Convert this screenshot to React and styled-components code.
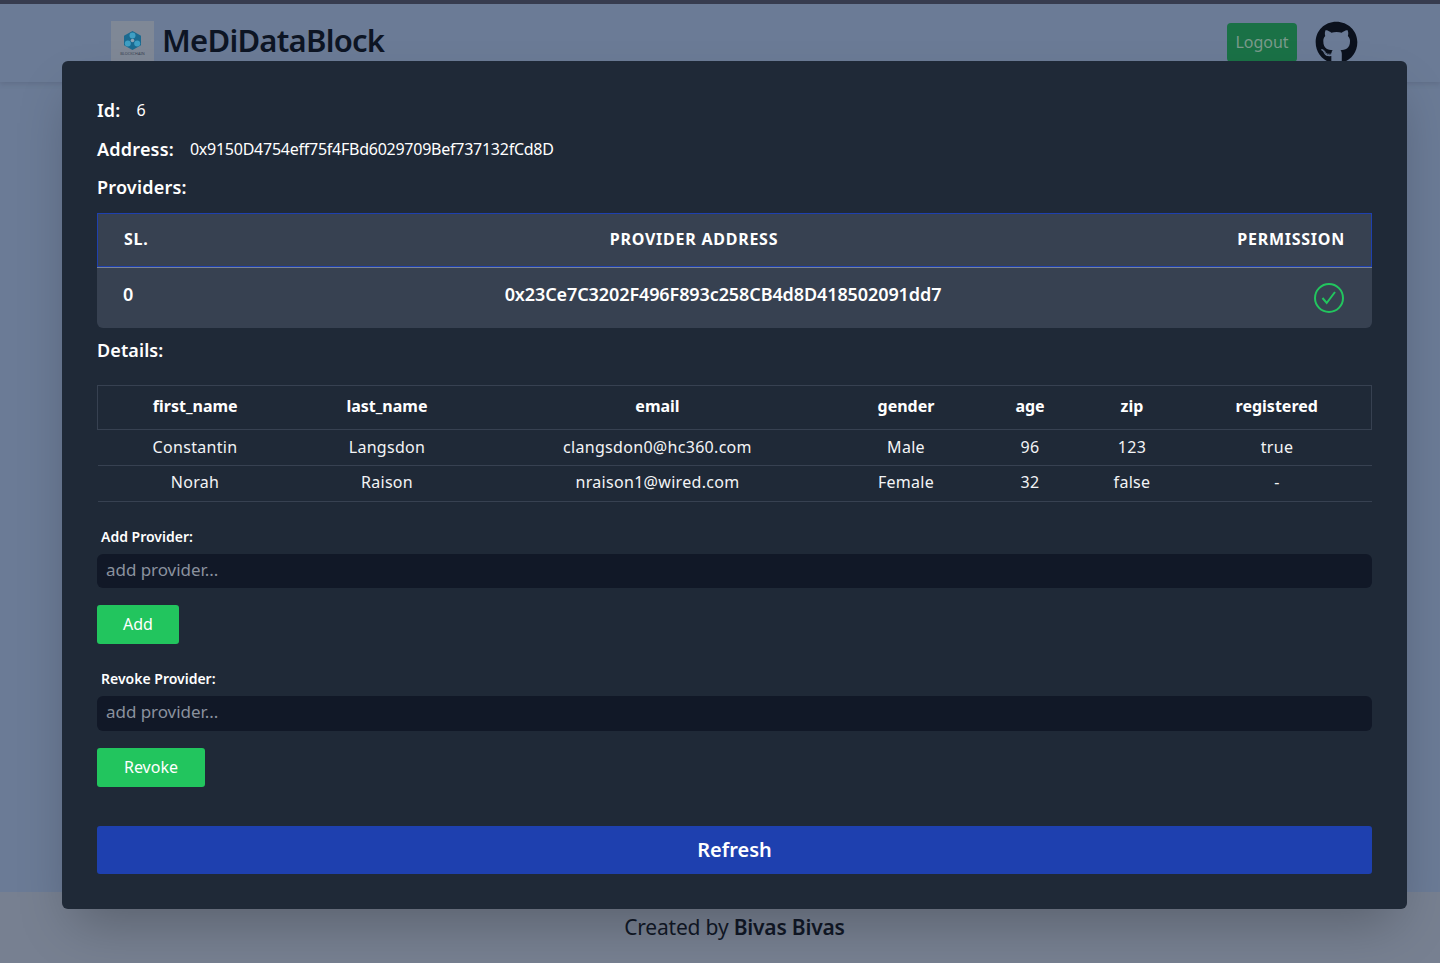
import React from 'react'
import styled, { createGlobalStyle } from 'styled-components'
import { FaGithub } from 'react-icons/fa'

const GlobalStyle = createGlobalStyle`
  * { box-sizing: border-box; }
  html, body { margin: 0; padding: 0; }
  body {
    font-family: "Noto Sans", "Open Sans", sans-serif;
    background: #6b7b96;
  }
`

const Page = styled.div`
  position: relative;
  display: flex;
  flex-direction: column;
  width: 100%;
  height: 963px;
  overflow: hidden;
  border-top: 4px solid #373c4f;
`
const Header = styled.header`
  position: relative;
  display: flex;
  align-items: flex-start;
  justify-content: space-between;
  height: 78px;
  padding: 17px 82px 0 111px;
  background: #6b7b96;
  box-shadow: 0 2px 5px rgba(55, 60, 79, 0.2);
`
const Brand = styled.div`
  display: flex;
  align-items: flex-start;
  gap: 8px;
`
const LogoBox = styled.div`
  display: flex;
  width: 43px;
  height: 43px;
  background: #7f8896;
`
const Title = styled.div`
  font-size: 31px;
  font-weight: 600;
  line-height: 38px;
  letter-spacing: -0.75px;
  color: #0d1524;
`
const HeaderRight = styled.div`
  display: flex;
  align-items: center;
  gap: 18px;
`
const Logout = styled.button`
  width: 70px;
  height: 39px;
  padding: 0 0 2px;
  border: none;
  border-radius: 4px;
  background: #1a7146;
  color: #7a9a8c;
  font: inherit;
  font-size: 16px;
`
const Github = styled(FaGithub)`
  display: block;
  width: 43px;
  height: 43px;
  color: #0b111d;
`
const Main = styled.main`
  flex: 1;
  background: #6b7b96;
`
const Footer = styled.footer`
  height: 71px;
  padding: 22px 0 0 29px;
  background: #778091;
  text-align: center;
  font-size: 21px;
  line-height: 27px;
  letter-spacing: -0.2px;
  color: #111827;
`
const Strong = styled.strong`
  font-weight: 600;
`
const Modal = styled.section`
  position: absolute;
  top: 57px;
  left: 62px;
  width: 1345px;
  height: 848px;
  padding: 30px 35px 0;
  border-radius: 6px;
  background: #1f2937;
  color: #fff;
  box-shadow: 0 25px 50px -12px rgba(0, 0, 0, 0.25);
`
const InfoRow = styled.div`
  display: flex;
  align-items: center;
  height: 38.5px;
  font-size: 16px;
  letter-spacing: -0.25px;
`
const InfoLabel = styled.span`
  font-size: 18px;
  font-weight: 600;
  letter-spacing: 0.2px;
  margin-right: 16px;
`
const ProviderTable = styled.div`
  margin-top: 6.5px;
  border-radius: 0 0 6px 6px;
  overflow: hidden;
  background: #374151;
`
const ProviderHead = styled.div`
  display: grid;
  grid-template-columns: 400px 340px 1fr;
  align-items: center;
  height: 54px;
  padding: 0 26px 3px;
  border: 1px solid #1e40af;
  font-size: 16px;
  font-weight: 700;
  letter-spacing: 0.75px;
`
const HeadCell = styled.div`
  text-align: ${(props) => props.$align};
`
const ProviderRow = styled.div`
  display: grid;
  grid-template-columns: 380px 440px 1fr;
  height: 61px;
  padding: 0 28px 8px 26px;
  align-items: center;
  border-top: 1px solid #7b8494;
  font-size: 18px;
  font-weight: 600;
  letter-spacing: -0.1px;
`
const Address = styled.div`
  text-align: center;
  white-space: nowrap;
`
const CheckWrap = styled.div`
  display: flex;
  justify-content: flex-end;
  margin-bottom: -8px;
`
const DetailsTitle = styled.div`
  margin: 11px 0 24px;
  font-size: 18px;
  font-weight: 600;
  line-height: 22px;
  letter-spacing: 0.1px;
`
const DataTable = styled.table`
  width: 100%;
  border-collapse: collapse;
  font-size: 16px;
  letter-spacing: 0.3px;
  table-layout: fixed;
`
const Th = styled.th`
  height: 44px;
  padding: 0 0 4px;
  font-weight: 700;
  letter-spacing: 0;
  border-top: 1px solid #374151;
  border-bottom: 1px solid #374151;
  &:first-child { border-left: 1px solid #374151; }
  &:last-child { border-right: 1px solid #374151; }
`
const Td = styled.td`
  height: 36px;
  padding: 0 0 ${(props) => props.$bottom}px;
  text-align: center;
  font-weight: 400;
  color: #f3f4f6;
  border-bottom: 1px solid #374151;
`
const FormBlock = styled.div`
  padding-top: 26px;
`
const FieldLabel = styled.label`
  display: block;
  margin: 0 0 8px 4px;
  font-size: 14px;
  font-weight: 600;
  line-height: 18px;
`
const Input = styled.input`
  display: block;
  width: 100%;
  height: ${(props) => props.$height}px;
  padding: 0 9px 4px;
  border: none;
  border-radius: 6px;
  background: #111827;
  color: #fff;
  font: inherit;
  font-size: 17px;
  letter-spacing: -0.05px;
  &::placeholder { color: #8a919e; opacity: 1; }
`
const GreenButton = styled.button`
  display: block;
  width: ${(props) => props.$width}px;
  height: 39px;
  margin-top: 17px;
  padding: 0 0 2px;
  border: none;
  border-radius: 3px;
  background: #22c55e;
  color: #fff;
  font: inherit;
  font-size: 16px;
`
const RefreshButton = styled.button`
  display: block;
  width: 100%;
  height: 48px;
  margin-top: 39px;
  padding: 0 0 2px;
  border: none;
  border-radius: 3px;
  background: #1e40af;
  color: #fff;
  font: inherit;
  font-size: 20px;
  font-weight: 600;
`

const columns = [
  ['first_name', 195],
  ['last_name', 189],
  ['email', 352],
  ['gender', 145],
  ['age', 103],
  ['zip', 101],
  ['registered', 189],
]

const rows = [
  ['Constantin', 'Langsdon', 'clangsdon0@hc360.com', 'Male', '96', '123', 'true'],
  ['Norah', 'Raison', 'nraison1@wired.com', 'Female', '32', 'false', '-'],
]

const Logo = () => (
  <svg width="43" height="43" viewBox="0 0 43 43">
    <path d="M21.500 10l8.500 4.800v9.400l-8.500 4.800-8.500-4.800v-9.400z" fill="#1b6a90" />
    <circle cx="21.500" cy="14.500" r="3" fill="#3f9fc4" />
    <circle cx="16.800" cy="22.500" r="3" fill="#3f9fc4" />
    <circle cx="26.200" cy="22.500" r="3" fill="#3f9fc4" />
    <circle cx="21.500" cy="19.500" r="1.800" fill="#8fa3b3" />
    <text x="21.500" y="33.500" textAnchor="middle" fontSize="3.900" fill="#3a4150">BLOCKCHAIN</text>
  </svg>
)

const CheckCircle = () => (
  <svg width="30" height="30" viewBox="0 0 30 30" fill="none" stroke="#22c55e" strokeWidth="2">
    <circle cx="15" cy="15" r="14" />
    <path d="M8.500 15l4.200 5 8.300-11" />
  </svg>
)

const App = () => {
  return (
    <>
      <GlobalStyle />
      <Page>
        <Header>
          <Brand>
            <LogoBox><Logo /></LogoBox>
            <Title>MeDiDataBlock</Title>
          </Brand>
          <HeaderRight>
            <Logout>Logout</Logout>
            <Github />
          </HeaderRight>
        </Header>
        <Main />
        <Footer>Created by <Strong>Bivas Bivas</Strong></Footer>

        <Modal>
          <InfoRow><InfoLabel>Id:</InfoLabel>6</InfoRow>
          <InfoRow><InfoLabel>Address:</InfoLabel>0x9150D4754eff75f4FBd6029709Bef737132fCd8D</InfoRow>
          <InfoRow><InfoLabel>Providers:</InfoLabel></InfoRow>
          <ProviderTable>
            <ProviderHead>
              <HeadCell $align="left">SL.</HeadCell>
              <HeadCell $align="center">PROVIDER ADDRESS</HeadCell>
              <HeadCell $align="right">PERMISSION</HeadCell>
            </ProviderHead>
            <ProviderRow>
              <div>0</div>
              <Address>0x23Ce7C3202F496F893c258CB4d8D418502091dd7</Address>
              <CheckWrap><CheckCircle /></CheckWrap>
            </ProviderRow>
          </ProviderTable>
          <DetailsTitle>Details:</DetailsTitle>
          <DataTable>
            <colgroup>
              {columns.map(([name, width]) => <col key={name} width={width} />)}
            </colgroup>
            <thead>
              <tr>{columns.map(([name]) => <Th key={name}>{name}</Th>)}</tr>
            </thead>
            <tbody>
              {rows.map((row, r) => (
                <tr key={row[0]}>{row.map((cell, i) => <Td key={i} $bottom={(r + 1) * 2}>{cell}</Td>)}</tr>
              ))}
            </tbody>
          </DataTable>
          <FormBlock>
            <FieldLabel>Add Provider:</FieldLabel>
            <Input $height={34} placeholder="add provider..." />
            <GreenButton $width={82}>Add</GreenButton>
          </FormBlock>
          <FormBlock>
            <FieldLabel>Revoke Provider:</FieldLabel>
            <Input $height={35} placeholder="add provider..." />
            <GreenButton $width={108}>Revoke</GreenButton>
          </FormBlock>
          <RefreshButton>Refresh</RefreshButton>
        </Modal>
      </Page>
    </>
  )
}

export default App
